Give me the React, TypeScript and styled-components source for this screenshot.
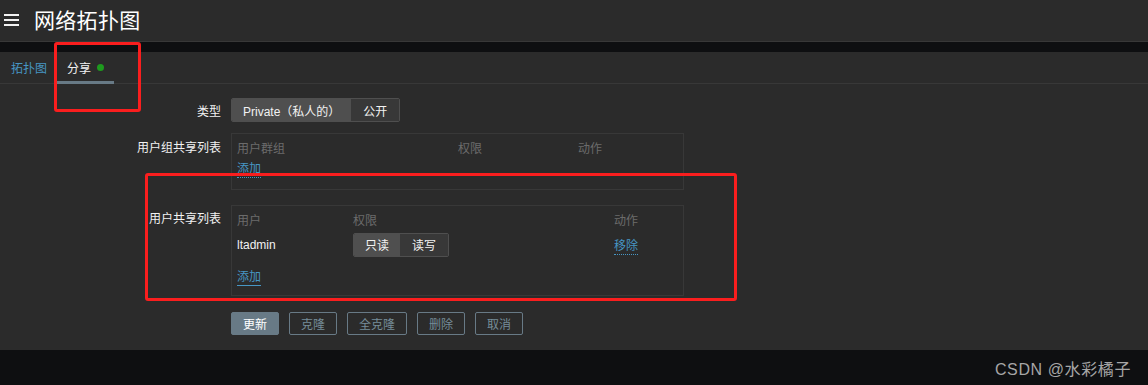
import React from "react";
import styled, { createGlobalStyle } from "styled-components";

const GlobalStyle = createGlobalStyle`
  html, body {
    margin: 0;
    padding: 0;
    background: #2b2b2b;
    font-family: "Liberation Sans", "Noto Sans CJK SC", sans-serif;
    font-size: 12px;
    color: #f2f2f2;
  }
`;

const Page = styled.div`
  position: relative;
  width: 1148px;
  height: 385px;
  overflow: hidden;
  display: flex;
  flex-direction: column;
  background: #2b2b2b;
`;

const Header = styled.div`
  height: 41px;
  display: flex;
  align-items: center;
  gap: 15px;
  padding-left: 4px;
  border-bottom: 1px solid #383838;
`;
const Burger = styled.div`
  width: 15px;
  display: flex;
  flex-direction: column;
  gap: 3px;
  margin-top: -2px;
  span {
    height: 2px;
    background: #f2f2f2;
  }
`;
const Title = styled.h1`
  margin: 0 0 4px;
  font-size: 21px;
  font-weight: normal;
  color: #ffffff;
  letter-spacing: 0.3px;
`;

const Band = styled.div`
  height: 10px;
  background: #0e0f11;
`;

const Tabs = styled.div`
  height: 31px;
  display: flex;
  padding-left: 1px;
  border-bottom: 1px solid #383838;
`;
const Tab = styled.div<{ $active?: boolean }>`
  display: flex;
  align-items: center;
  gap: 6px;
  padding: 0 10px;
  color: ${(p) => (p.$active ? "#f2f2f2" : "#4796c4")};
  border-bottom: 3px solid ${(p) => (p.$active ? "#687a86" : "transparent")};
  margin-bottom: -1px;
  padding-top: 2px;
`;
const Dot = styled.span`
  width: 7px;
  height: 7px;
  border-radius: 50%;
  background: #1e9a1e;
`;

const Content = styled.div`
  flex: 1;
  padding-top: 14px;
`;

const Form = styled.div`
  display: grid;
  grid-template-columns: 221px 453px;
  column-gap: 10px;
  row-gap: 11px;
`;
const Label = styled.div<{ $top?: number }>`
  text-align: right;
  padding-top: ${(p) => p.$top ?? 4}px;
  color: #f2f2f2;
`;

const Segmented = styled.div`
  display: inline-flex;
  border: 1px solid #4f4f4f;
  border-radius: 2px;
  overflow: hidden;
  height: 22px;
`;
const Seg = styled.div<{ $on?: boolean }>`
  display: flex;
  align-items: center;
  padding: 0 ${(p) => (p.$on ? 11 : 12)}px;
  background: ${(p) => (p.$on ? "#4f4f4f" : "#383838")};
  color: #f2f2f2;
`;

const TableBox = styled.div<{ $h: number; $top?: number }>`
  height: ${(p) => p.$h}px;
  margin-top: ${(p) => p.$top ?? 0}px;
  border: 1px solid #383838;
  box-sizing: border-box;
  padding: 5px 5px 0;
`;
const Row = styled.div<{ $cols: string; $h?: number }>`
  display: grid;
  grid-template-columns: ${(p) => p.$cols};
  align-items: center;
  height: ${(p) => p.$h ?? 16}px;
`;
const Th = styled.div`
  color: #6b6b6b;
`;
const Td = styled.div`
  color: #f2f2f2;
`;
const Link = styled.span<{ $solid?: boolean }>`
  color: #4796c4;
  border-bottom: 1px ${(p) => (p.$solid ? "solid" : "dotted")} #4796c4;
  padding-bottom: 1px;
`;

const Buttons = styled.div`
  display: flex;
  gap: 10px;
  margin-top: 5px;
`;
const Button = styled.div<{ $primary?: boolean }>`
  height: 21px;
  padding: 0 11px;
  display: flex;
  align-items: center;
  border: 1px solid #687a86;
  border-radius: 2px;
  background: ${(p) => (p.$primary ? "#687a86" : "transparent")};
  color: ${(p) => (p.$primary ? "#ffffff" : "#768d99")};
`;

const Footer = styled.div`
  height: 35px;
  background: #0e0f11;
  display: flex;
  align-items: center;
  justify-content: flex-end;
  padding-right: 17px;
  font-size: 16px;
  letter-spacing: 0.6px;
  color: #a6a6a6;
`;

const Mark = styled.div<{ $x: number; $y: number; $w: number; $h: number }>`
  position: absolute;
  left: ${(p) => p.$x}px;
  top: ${(p) => p.$y}px;
  width: ${(p) => p.$w}px;
  height: ${(p) => p.$h}px;
  box-sizing: border-box;
  border: 3px solid #fa1e1e;
  border-radius: 3px;
  pointer-events: none;
`;

export default function App() {
  return (
    <>
      <GlobalStyle />
      <Page>
        <Header>
          <Burger>
            <span />
            <span />
            <span />
          </Burger>
          <Title>网络拓扑图</Title>
        </Header>
        <Band />
        <Tabs>
          <Tab>拓扑图</Tab>
          <Tab $active>
            分享
            <Dot />
          </Tab>
        </Tabs>
        <Content>
          <Form>
            <Label>类型</Label>
            <div>
              <Segmented>
                <Seg $on>Private（私人的）</Seg>
                <Seg>公开</Seg>
              </Segmented>
            </div>

            <Label $top={5}>用户组共享列表</Label>
            <TableBox $h={57}>
              <Row $cols="221px 120px 1fr" $h={16}>
                <Th>用户群组</Th>
                <Th>权限</Th>
                <Th>动作</Th>
              </Row>
              <Row $cols="1fr" $h={24}>
                <div>
                  <Link>添加</Link>
                </div>
              </Row>
            </TableBox>

            <Label $top={8}>用户共享列表</Label>
            <TableBox $h={91} $top={4}>
              <Row $cols="116px 261px 1fr" $h={16}>
                <Th>用户</Th>
                <Th>权限</Th>
                <Th>动作</Th>
              </Row>
              <Row $cols="116px 261px 1fr" $h={35}>
                <Td>ltadmin</Td>
                <div>
                  <Segmented>
                    <Seg $on>只读</Seg>
                    <Seg>读写</Seg>
                  </Segmented>
                </div>
                <div>
                  <Link>移除</Link>
                </div>
              </Row>
              <Row $cols="1fr" $h={26}>
                <div>
                  <Link $solid>添加</Link>
                </div>
              </Row>
            </TableBox>

            <div />
            <Buttons>
              <Button $primary>更新</Button>
              <Button>克隆</Button>
              <Button>全克隆</Button>
              <Button>删除</Button>
              <Button>取消</Button>
            </Buttons>
          </Form>
        </Content>
        <Footer>CSDN @水彩橘子</Footer>
        <Mark $x={54} $y={42} $w={87} $h={70} />
        <Mark $x={145} $y={173} $w={592} $h={128} />
      </Page>
    </>
  );
}
